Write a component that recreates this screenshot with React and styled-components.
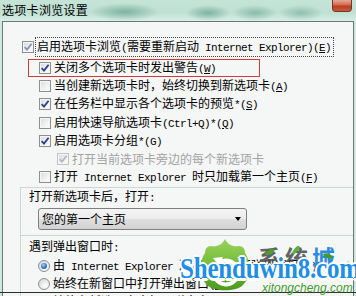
import React from 'react';
import styled, { createGlobalStyle } from 'styled-components';

const Global = createGlobalStyle`
  html, body { margin: 0; padding: 0; background: #cfe7de; }
  body { font-family: "Noto Sans CJK SC", "Noto Sans", sans-serif; }
`;

const Window = styled.div`
  position: relative;
  width: 356px;
  height: 296px;
  overflow: hidden;
  display: flex;
  flex-direction: column;
  background: #cfe7de;
`;

const TitleBar = styled.div`
  flex: none;
  height: 21px;
  display: flex;
  align-items: flex-start;
  justify-content: space-between;
  padding: 0 4px 0 2px;
  background:
    radial-gradient(ellipse 34px 9px at 125px 12px, rgba(70,140,120,0.55), transparent),
    radial-gradient(ellipse 22px 8px at 208px 13px, rgba(70,140,120,0.55), transparent),
    radial-gradient(ellipse 22px 8px at 255px 13px, rgba(70,140,120,0.45), transparent),
    radial-gradient(ellipse 22px 8px at 301px 13px, rgba(70,140,120,0.4), transparent),
    linear-gradient(180deg, #c5e4d8 0%, #bfe0d3 60%, #d8eee6 100%);
`;

const Title = styled.span`
  font-size: 12px;
  line-height: 20px;
  color: #000;
  letter-spacing: 0.3px;
`;

const CloseButton = styled.div`
  width: 20px;
  height: 12px;
  box-sizing: border-box;
  border: 1px solid #7a3424;
  border-top: none;
  border-radius: 0 0 4px 4px;
  background: linear-gradient(180deg, #e8a898 0%, #d06a50 45%, #b83c22 55%, #c85a3c 100%);
`;

const Body = styled.div`
  flex: 1;
  margin: 0 2px 0 2px;
  border: 1px solid #6d7875;
  border-bottom: none;
  background: #f5f6f6;
  display: flex;
  flex-direction: column;
  padding-top: 15px;
  min-height: 0;
`;

const Row = styled.div`
  display: flex;
  align-items: center;
  gap: 3px;
  height: 18.3px;
  flex: none;
  padding-left: ${p => p.$indent}px;
  white-space: nowrap;
  font-size: 12px;
  line-height: 14px;
  color: ${p => (p.$disabled ? '#a3a3a3' : '#000')};
`;

const FirstRow = styled(Row)`
  height: 19px;
  margin-bottom: 2.5px;
`;

const Highlight = styled(Row)`
  box-sizing: border-box;
  margin-left: 25px;
  width: 232px;
  border: 1px solid #d23a3a;
  padding-left: 10px;
`;

const Focus = styled.span`
  outline: 1px dotted #444;
  outline-offset: 1px;
  padding-right: 1px;
`;

const L = styled.span`
  font-family: "Liberation Mono", monospace;
  font-size: 11px;
  letter-spacing: -0.6px;
  white-space: pre;
`;

const U = styled.span`
  text-decoration: underline;
  text-underline-offset: 1px;
`;

const Box = styled.span`
  flex: none;
  position: relative;
  width: 12px;
  height: 12px;
  box-sizing: border-box;
  border: 1px solid ${p => (p.$disabled ? '#bfc2c4' : '#8e8f8f')};
  background: linear-gradient(135deg, #d8d9da 0%, #f2f2f2 60%, #ffffff 100%);
  box-shadow: inset 0 0 0 1px #f6f6f6;
  svg { position: absolute; left: 0; top: 0; }
`;

const Dot = styled.span`
  flex: none;
  position: relative;
  width: 12px;
  height: 12px;
  box-sizing: border-box;
  border-radius: 50%;
  border: 1px solid #8e8f8f;
  background: radial-gradient(circle at 65% 70%, #ffffff 0%, #e4e4e4 60%, #cfcfcf 100%);
  &::after {
    content: '';
    display: ${p => (p.$on ? 'block' : 'none')};
    position: absolute;
    left: 2px;
    top: 2px;
    width: 6px;
    height: 6px;
    border-radius: 50%;
    background: radial-gradient(circle at 40% 35%, #9fd4ff 0%, #3d86d0 45%, #173f7a 100%);
  }
`;

const Group = styled.div`
  flex: none;
  margin-left: 17px;
  border-top: 1px solid #cdd5d9;
  border-left: 1px solid #cdd5d9;
  display: flex;
  flex-direction: column;
  padding-top: ${p => p.$top}px;
  padding-bottom: ${p => p.$bottom || 0}px;
`;

const GroupLabel = styled.div`
  font-size: 12px;
  line-height: 14px;
  padding-left: 8px;
  color: #000;
  white-space: nowrap;
`;

const Select = styled.div`
  margin: 3px 0 0 17px;
  width: 209px;
  height: 22px;
  box-sizing: border-box;
  border: 1px solid #7d7f80;
  border-radius: 3px;
  background: linear-gradient(180deg, #f4f4f4 0%, #ececec 48%, #dedede 52%, #d2d2d2 100%);
  display: flex;
  align-items: center;
  justify-content: space-between;
  padding: 0 5px 0 3px;
  font-size: 12px;
  color: #000;
`;

const Arrow = styled.span`
  width: 0;
  height: 0;
  border-left: 3.5px solid transparent;
  border-right: 3.5px solid transparent;
  border-top: 4px solid #000;
  margin-top: 1px;
`;

const RadioList = styled.div`
  display: flex;
  flex-direction: column;
  margin-top: 2px;
`;

const BottomEdge = styled.div`
  position: absolute;
  left: 0;
  right: 0;
  top: 292px;
  height: 1px;
  background: #2b2f2e;
`;

const Watermark = styled.div`
  position: absolute;
  left: 178px;
  top: 236px;
  width: 178px;
  height: 60px;
  pointer-events: none;
`;

const Logo = styled.svg`
  position: absolute;
  left: 22px;
  top: 2px;
`;

const SiteCn = styled.div`
  position: absolute;
  left: 80px;
  top: 8px;
  font-size: 23px;
  line-height: 26px;
  letter-spacing: 4px;
  font-weight: 700;
  color: rgba(70, 72, 74, 0.85);
  white-space: nowrap;
`;

const Blue = styled.span`
  color: #2b8be0;
`;

const SiteEn = styled.div`
  position: absolute;
  left: 2px;
  top: 16px;
  font-family: "Liberation Serif", serif;
  font-weight: 700;
  font-size: 25px;
  line-height: 28px;
  letter-spacing: -0.2px;
  color: #1e8ee6;
  white-space: nowrap;
  transform: scaleY(1.2);
  transform-origin: left top;
  text-shadow:
    1px 0 0 #fff, -1px 0 0 #fff, 0 1px 0 #fff, 0 -1px 0 #fff,
    1px 1px 0 #fff, -1px -1px 0 #fff, 1px -1px 0 #fff, -1px 1px 0 #fff,
    2px 0 0 #fff, -2px 0 0 #fff, 0 2px 0 #fff, 0 -2px 0 #fff;
`;

const SiteSub = styled.div`
  position: absolute;
  left: 84px;
  top: 46px;
  font-family: "Liberation Sans", sans-serif;
  font-style: italic;
  font-size: 12px;
  line-height: 13px;
  color: #3f9a2c;
  white-space: nowrap;
  text-shadow: 0 0 1px #fff;
`;

function Check({ on, tone, disabled }) {
  const color = disabled ? '#b4b7ba' : tone || '#2a3f8f';
  return (
    <Box $disabled={disabled}>
      {on && (
        <svg width="10" height="10" viewBox="0 0 10 10">
          <path d="M1.6 5.2 L4 7.6 L8.6 1.8" fill="none" stroke={color} strokeWidth="1.8" />
        </svg>
      )}
    </Box>
  );
}

function Leaf({ x, y, r, c }) {
  return <ellipse cx={x} cy={y} rx="5" ry="2" transform={`rotate(${r} ${x} ${y})`} fill={c} />;
}

export default function App() {
  return (
    <Window>
      <Global />
      <TitleBar>
        <Title>选项卡浏览设置</Title>
        <CloseButton />
      </TitleBar>
      <Body>
        <FirstRow $indent={19}>
          <Check on tone="#7f93bf" />
          <Focus>启用选项卡浏览<L>(</L>需要重新启动<L> Internet Explorer)(<U>E</U>)</L></Focus>
        </FirstRow>
        <Highlight>
          <Check on />
          <span>关闭多个选项卡时发出警告<L>(<U>W</U>)</L></span>
        </Highlight>
        <Row $indent={36}>
          <Check />
          <span>当创建新选项卡时，始终切换到新选项卡<L>(<U>A</U>)</L></span>
        </Row>
        <Row $indent={36}>
          <Check on />
          <span>在任务栏中显示各个选项卡的预览<L>*(<U>S</U>)</L></span>
        </Row>
        <Row $indent={36}>
          <Check />
          <span>启用快速导航选项卡<L>(Ctrl+Q)*(<U>Q</U>)</L></span>
        </Row>
        <Row $indent={36}>
          <Check on />
          <span>启用选项卡分组<L>*(G)</L></span>
        </Row>
        <Row $indent={54} $disabled>
          <Check on disabled />
          <span>打开当前选项卡旁边的每个新选项卡</span>
        </Row>
        <Row $indent={36}>
          <Check />
          <span>打开<L> Internet Explorer </L>时只加载第一个主页<L>(<U>F</U>)</L></span>
        </Row>
        <Group $top={1} $bottom={5}>
          <GroupLabel>打开新选项卡后，打开<L>:</L></GroupLabel>
          <Select>
            <span>您的第一个主页</span>
            <Arrow />
          </Select>
        </Group>
        <Group $top={3}>
          <GroupLabel>遇到弹出窗口时<L>:</L></GroupLabel>
          <RadioList>
            <Row $indent={17}>
              <Dot $on />
              <span>由<L> Internet Explorer </L>决定如何打开弹出窗口<L>(<U>L</U>)</L></span>
            </Row>
            <Row $indent={17}>
              <Dot />
              <span>始终在新窗口中打开弹出窗口<L>(<U>W</U>)</L></span>
            </Row>
            <Row $indent={17}>
              <Dot />
              <span>始终在新选项卡中打开弹出窗口<L>(<U>T</U>)</L></span>
            </Row>
          </RadioList>
        </Group>
      </Body>
      <BottomEdge />
      <Watermark>
        <Logo width="50" height="56" viewBox="0 0 50 56">
          <defs>
            <linearGradient id="lg" x1="0" y1="0" x2="0" y2="1">
              <stop offset="0" stopColor="#9bd45a" />
              <stop offset="0.6" stopColor="#6cb634" />
              <stop offset="1" stopColor="#4e9a1e" />
            </linearGradient>
          </defs>
          <path
            d="M25 1 C28 7 33 9 39 8 C43 8 45 11 45 15 C51 23 51 39 43 47 C37 54 13 54 7 47 C-1 39 -1 23 5 15 C5 11 7 8 11 8 C17 9 22 7 25 1 Z"
            fill="url(#lg)"
          />
          <path d="M14 36 A12 12 0 1 0 20 24" fill="none" stroke="#fff" strokeWidth="4" strokeLinecap="round" />
          <path d="M13 20 L23 19 L19 28 Z" fill="#fff" />
        </Logo>
        <SiteCn>系统<Blue>城</Blue></SiteCn>
        <svg width="178" height="60" style={{ position: 'absolute', left: 0, top: 0 }}>
          <Leaf x={92} y={16} r={-30} c="#4aa02c" />
          <Leaf x={150} y={20} r={20} c="#3f9a2c" />
          <Leaf x={172} y={30} r={60} c="#3f9a2c" />
          <Leaf x={118} y={14} r={-50} c="#5ab03a" />
        </svg>
        <SiteEn>Shenduwin8.com</SiteEn>
        <SiteSub>xitongcheng.com</SiteSub>
      </Watermark>
    </Window>
  );
}
